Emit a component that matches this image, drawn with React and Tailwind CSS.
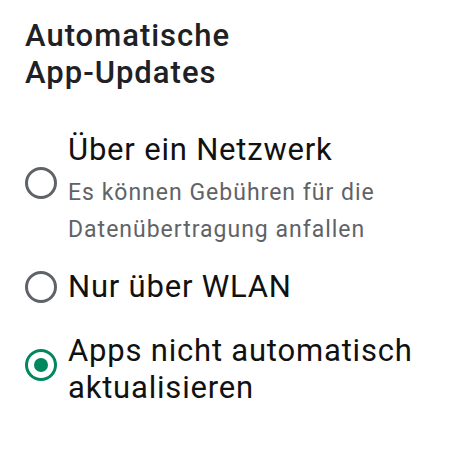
import React, { useState } from 'react'

const options = [
  { id: 'any', label: 'Über ein Netzwerk', hint: 'Es können Gebühren für die Datenübertragung anfallen' },
  { id: 'wifi', label: 'Nur über WLAN' },
  { id: 'off', label: 'Apps nicht automatisch aktualisieren' },
]

function Radio({ checked }) {
  return (
    <span
      className={
        'flex h-[32px] w-[32px] shrink-0 items-center justify-center rounded-full border-[3px] ' +
        (checked ? 'border-[#01875f]' : 'border-[#5f6368]')
      }
    >
      {checked && <span className="h-[14px] w-[14px] rounded-full bg-[#01875f]" />}
    </span>
  )
}

export default function App() {
  const [value, setValue] = useState('off')
  return (
    <div className="h-[450px] w-[450px] overflow-hidden bg-white pl-[25px] pt-[17px] font-['Roboto',sans-serif] text-[#202124]">
      <h1 className="text-[31px] font-medium leading-[37px] tracking-[1px]">
        Automatische
        <br />
        App-Updates
      </h1>

      <div className="mt-[40px] flex flex-col">
        {options.map((o, i) => (
          <button
            key={o.id}
            onClick={() => setValue(o.id)}
            className={
              'flex items-center gap-[11px] text-left ' +
              (i === 1 ? 'mt-[20px]' : i === 2 ? 'mt-[27px]' : '')
            }
          >
            <span className={o.hint ? 'mt-[-14px]' : i === 2 ? 'mt-[-8px]' : ''}>
              <Radio checked={value === o.id} />
            </span>
            <span className="flex w-[350px] flex-col">
              <span className="text-[31px] leading-[37px] tracking-[0.8px] text-[#111]">{o.label}</span>
              {o.hint && (
                <span className="mt-[7px] text-[23px] leading-[36.6px] tracking-[1px] text-[#5f6368]">
                  {o.hint}
                </span>
              )}
            </span>
          </button>
        ))}
      </div>
    </div>
  )
}
